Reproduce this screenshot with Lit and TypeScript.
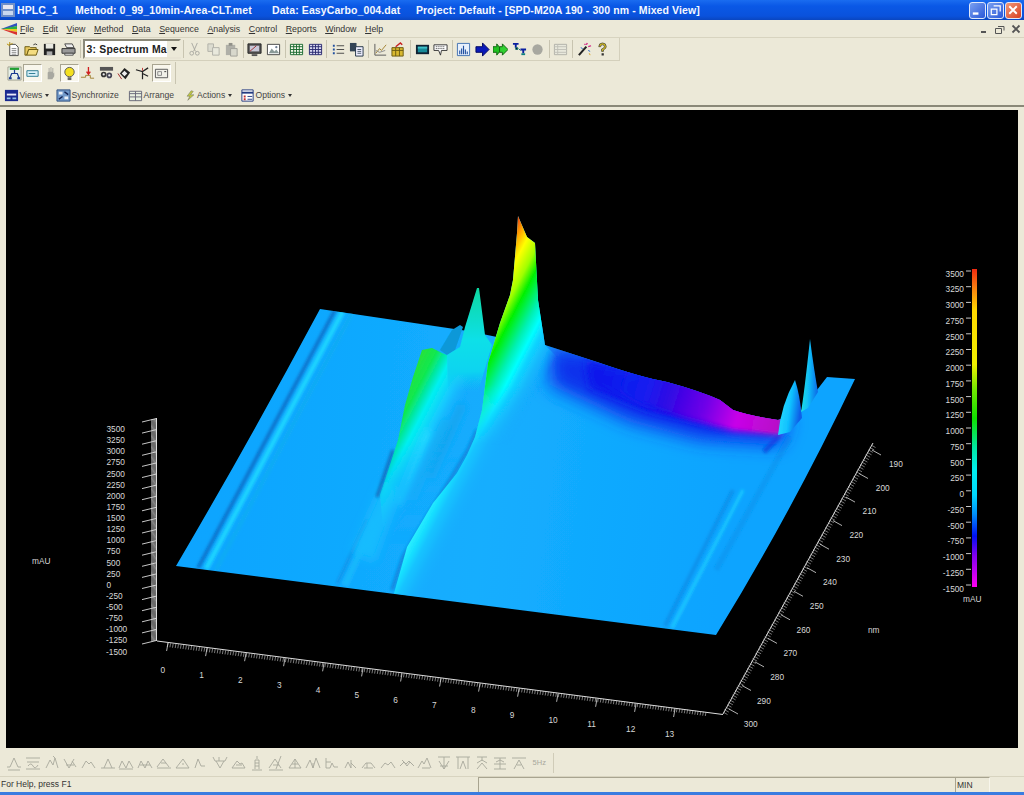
import { LitElement, html, css, svg } from 'lit';
import { customElement } from 'lit/decorators.js';

// 16x16 toolbar glyphs
const ICONS: Record<string, unknown> = {
  neu: svg`<path d="M4 2.5h6l3 3v9H4z" fill="#fff" stroke="#444"/><path d="M6 7h5M6 9h5M6 11h5M6 13h5" stroke="#888"/><path d="M1 2l3 2M4 0v3M7 1L5 3" stroke="#b89000"/>`,
  open: svg`<path d="M1 5h5l1 1h6v2H5l-2 6H1z" fill="#e8c860" stroke="#6a5a10"/><path d="M3 14l2-6h10l-2 6z" fill="#f4dc80" stroke="#6a5a10"/><path d="M10 3q2-2 4 0" stroke="#333" fill="none"/>`,
  save: svg`<path d="M2 2h12v12H2z" fill="#222"/><path d="M4 2h8v5H4z" fill="#e8e8e0"/><path d="M5 10h6v4H5z" fill="#aaa"/>`,
  print: svg`<path d="M4 2h8l2 4H6z" fill="#eee" stroke="#444"/><path d="M1 7h14v5H1z" fill="#999" stroke="#333"/><path d="M4 12h9v2H4z" fill="#fff" stroke="#444"/>`,
  cut: svg`<path d="M5 1l4 9M11 1L7 10" stroke="#a8a8a0" fill="none"/><circle cx="5" cy="12" r="2" stroke="#a8a8a0" fill="none"/><circle cx="11" cy="12" r="2" stroke="#a8a8a0" fill="none"/>`,
  copy: svg`<path d="M2 2h6v8H2z" fill="#dcdcd0" stroke="#b0b0a8"/><path d="M7 6h7v8H7z" fill="#e8e8dc" stroke="#b0b0a8"/>`,
  paste: svg`<path d="M2 3h10v11H2z" fill="#b0b0a8"/><path d="M5 1h4v3H5z" fill="#909088"/><path d="M7 7h7v8H7z" fill="#d8d8cc" stroke="#a0a098"/>`,
  monitor: svg`<path d="M1 2h14v10H1z" fill="#555" stroke="#222"/><path d="M3 4h10v6H3z" fill="#c8c8d8"/><path d="M3 10l7-6" stroke="#a03030"/><path d="M5 13h6v2H5z" fill="#555"/>`,
  picture: svg`<path d="M1.5 2.5h13v11h-13z" fill="#fff" stroke="#444"/><path d="M3 12l3-5 3 3 2-2 3 4z" fill="#8a9a98"/><circle cx="11" cy="5.5" r="1.2" fill="#6a7a90"/>`,
  gridg: svg`<path d="M1.5 2.5h13v11h-13z" fill="#f4f8e8" stroke="#1a6a30"/><path d="M1.5 5h13M1.5 8h13M1.5 11h13M5 2.5v11M8 2.5v11M11 2.5v11" stroke="#1a6a30"/>`,
  gridb: svg`<path d="M1.5 2.5h13v11h-13z" fill="#d8d8f0" stroke="#2a2a70"/><path d="M1.5 5h13M1.5 8h13M1.5 11h13M5 2.5v11M8 2.5v11M11 2.5v11" stroke="#2a2a70"/>`,
  list: svg`<path d="M2 3h2v2H2zM2 7h2v2H2zM2 11h2v2H2z" fill="#2050a0"/><path d="M6 4h8M6 8h8M6 12h8" stroke="#444"/>`,
  docs: svg`<path d="M1 1h7v9H1z" fill="#345" /><path d="M7 5h8v10H7z" fill="#eef" stroke="#234"/><path d="M9 8h4M9 10h4M9 12h4" stroke="#456"/>`,
  chart: svg`<path d="M2 2v12h12" stroke="#555" fill="none"/><path d="M3 12l4-5 2 2 5-6" stroke="#a08030" fill="none"/><path d="M3 9l4 2 6-2" stroke="#888" fill="none"/>`,
  brief: svg`<path d="M1 6h12v9H1z" fill="#d8b830" stroke="#6a5a10"/><path d="M1 9h12M5 6v9M9 6v9" stroke="#6a5a10"/><path d="M5 5l5-4 2 2" stroke="#c82020" fill="none" stroke-width="1.5"/>`,
  teal: svg`<path d="M1 3h14v10H1z" fill="#123"/><path d="M3 5h10v6H3z" fill="#188a98"/><path d="M3 5h10v2H3z" fill="#40c0c8"/>`,
  speech: svg`<path d="M1 3h14v6H9l-1 5-2-5H1z" fill="#fff" stroke="#333"/><path d="M3 5h10M3 7h10" stroke="#333" stroke-dasharray="1 1"/>`,
  bars: svg`<path d="M1.5 1.5h13v13h-13z" fill="#e8f0fc" stroke="#4070b0"/><path d="M4 13V9M6 13V7M8 13V4M10 13V8M12 13V10" stroke="#2050a0" stroke-width="1.2"/>`,
  arrow: svg`<path d="M1 5h7V1l7 7-7 7v-4H1z" fill="#0a1ab8" stroke="#000860"/>`,
  arrow2: svg`<path d="M0 5h4V2l5 6-5 6v-3H0z" fill="#20c020" stroke="#106010"/><path d="M7 5h3V2l6 6-6 6v-3H7z" fill="#30d030" stroke="#106010"/>`,
  tree: svg`<path d="M1 2h6M4 2v4M9 8h6M12 8v4" stroke="#0a20a0" stroke-width="2" fill="none"/><path d="M4 6h2v2H4zM7 7l2 2" stroke="#107070"/><path d="M10 13h4" stroke="#108080" stroke-width="2"/>`,
  dot: svg`<circle cx="8" cy="8" r="5.5" fill="#a8a8a0"/>`,
  table: svg`<path d="M1.5 2.5h13v11h-13z" fill="#e8e8dc" stroke="#b0b0a8"/><path d="M1.5 5h13M1.5 8h13M1.5 11h13M5 2.5v11" stroke="#c0c0b8"/>`,
  wand: svg`<path d="M2 14l8-9" stroke="#222" stroke-width="2.2"/><path d="M10 3l1-2M12 5l3-1M8 2l1 1" stroke="#d02080" stroke-width="1.4"/><path d="M12 9l2 1M4 6l2 1" stroke="#2060c0"/><path d="M13 12l1 2" stroke="#d8a020"/>`,
  help: svg`<path d="M4 5q0-4 4-4t4 4q0 2-3 3.5V10H7V7.5q3-1 3-2.5 0-2-2-2T6 5z" fill="#d8c020" stroke="#333" stroke-width=".7"/><path d="M7 12h2.4v2.4H7z" fill="#333"/>`,
  net: svg`<path d="M1 1h14v14H1z" fill="#e8f0e8" stroke="#a0a090"/><path d="M3 3h10" stroke="#20a030" stroke-width="2.4"/><path d="M8 4v4M3 13l2-5h6l2 5" stroke="#1a3a90" stroke-width="1.3" fill="none"/><path d="M2 13h3M11 13h3" stroke="#1a3a90" stroke-width="2"/>`,
  field: svg`<path d="M2 5h12v6H2z" fill="#d8f0f8" stroke="#2a7a90"/><path d="M4 8h7" stroke="#2a7a90"/>`,
  hand: svg`<path d="M5 14V7l1-1v-4h1v4h1V1h1v5h1V2h1v6l1-1v4l-2 3z" fill="#a8a8a0"/>`,
  bulb: svg`<circle cx="8" cy="6.500" r="5" fill="#f4e020" stroke="#555"/><path d="M6 12h4v3H6z" fill="#666"/>`,
  peakr: svg`<path d="M1 12h5v-2h5v3h4" stroke="#a08030" fill="none"/><path d="M9 1v7M7 6l2 3 2-3" stroke="#d02020" fill="none" stroke-width="1.4"/>`,
  mol: svg`<path d="M1 1h14v4H1z" fill="#555"/><circle cx="5" cy="9" r="3" fill="#333"/><circle cx="11" cy="10" r="3" fill="#445"/><circle cx="5" cy="9" r="1.200" fill="#eee"/><circle cx="11" cy="10" r="1.200" fill="#eee"/>`,
  tag: svg`<path d="M3 8l5-6 6 5-5 7z" fill="#222"/><path d="M5 8l3-3 3 3-3 3z" fill="#eee"/><path d="M1 8l4 6" stroke="#a02020"/>`,
  cross: svg`<path d="M1 4l7 2 6-4M8 6v8M8 8l6 3" stroke="#222" fill="none" stroke-width="1.3"/><path d="M8 2v3" stroke="#c03030"/>`,
  panel: svg`<path d="M1.5 3.5h13v9h-13z" fill="#f0f0e8" stroke="#555"/><path d="M4 6h4v4H4z" fill="none" stroke="#888"/><path d="M11 6h2" stroke="#333"/>`,
  views: svg`<path d="M1 2h14v12H1z" fill="#1a2a90"/><path d="M3 6h10v2H3z" fill="#e8e8f8"/><path d="M3 10h4v2H3zM9 10h4v2H9z" fill="#90c0e8"/>`,
  sync: svg`<path d="M1 2h14v12H1z" fill="#7098c8" stroke="#305080"/><path d="M3 4h4v3H3zM9 9h4v3H9z" fill="#e8f0f8"/><path d="M9 4l4 3M3 12l4-3" stroke="#102050" stroke-width="1.5"/>`,
  arrange: svg`<path d="M1.5 3.5h13v10h-13z" fill="#e8f0e0" stroke="#667"/><path d="M1.5 6h13M8 3.5v10M1.5 9.5h13" stroke="#667"/>`,
  actions: svg`<path d="M9 1L3 9h4l-3 6 9-8H8l4-5z" fill="#c0c840" stroke="#555" stroke-width=".6"/>`,
  options: svg`<path d="M2 2h12v12H2z" fill="#fff" stroke="#223a80"/><path d="M2 5h12" stroke="#223a80" stroke-width="2"/><path d="M4 8h2v2H4zM4 11h2v2H4z" fill="#c03030"/><path d="M8 9h5M8 12h5" stroke="#223a80"/>`,
};

const TOOLBAR_1 = [
  'neu', 'open', 'save', 'print', '|', 'combo', '|', 'cut', 'copy', 'paste', '|', 'monitor', 'picture', '|',
  'gridg', 'gridb', '|', 'list', 'docs', '|', 'chart', 'brief', '|', 'teal', 'speech', '|',
  'bars', 'arrow', 'arrow2', 'tree', 'dot', '|', 'table', '|', 'wand', 'help',
];

const TOOLBAR_2 = [
  { i: 'net', on: false }, { i: 'field', on: true }, { i: 'hand', on: false }, { i: 'bulb', on: true },
  { i: 'peakr', on: false }, { i: 'mol', on: false }, { i: 'tag', on: false }, { i: 'cross', on: false }, { i: 'panel', on: true },
];

const MENU = [
  ['F', 'ile'], ['E', 'dit'], ['V', 'iew'], ['M', 'ethod'], ['D', 'ata'], ['S', 'equence'],
  ['A', 'nalysis'], ['C', 'ontrol'], ['R', 'eports'], ['W', 'indow'], ['H', 'elp'],
];

// grey peak glyphs of the integration bar
const PEAKS = [
  'M1 12h3l4-9 4 9h3M2 15h12', 'M1 3h14M2 7h12M3 11q3-4 5 0t5-1M1 14h14', 'M2 13l4-8 3 5 2-7 3 10M9 1l2 2', 'M2 4l5 9M7 13l5-9M4 10h8M10 6l4 6',
  'M1 13l4-7 3 3 2-2 4 6', 'M1 13h3l4-9 4 9h3M4 13h8', 'M1 13l3-7 4 7 3-7 4 7M1 14h14', 'M1 13l3-7 4 7 3-7 4 7M3 10h10',
  'M1 12l6-8 6 8M1 13h14M5 8h5', 'M1 13l7-9 6 9zM7 9h2', 'M2 13l3-9 3 7h4', 'M1 2l2 4h10l2-4M4 6l4 7 4-7M7 2v4',
  'M1 13l5-7 3 3 2-1 3 5zM5 10h6', 'M8 1v3M6 14V5h4v9M3 15h10M6 8h4M6 11h4', 'M1 13l6-9 6 9M13 1L8 14M1 15h14M5 10h6', 'M2 13l6-9 6 9zM5 9h6M8 4v9',
  'M1 13l4-8 3 8 3-10 4 10M8 8v5', 'M2 3v10h4l2-5 2 4h4M2 7h5', 'M2 13l3-6 3 6M8 13V5M8 8l5 5', 'M1 13l4-5h5l4 5M3 13h9M6 8v5',
  'M1 13l4-5 3 2 3-3 4 6', 'M1 11l4-4 3 4 3-4 4 4M3 5l4 4 3-3 4 4', 'M1 13l4-7 2 3 3-6 4 10M5 13h8', 'M2 2h12M8 2v12M3 6l5 8 5-8M4 11h8',
  'M1 2h14M3 2v12M13 2v12M5 14l3-8 3 8', 'M3 2h10M8 2v4M3 8l5-3 5 3M3 14l5-6 5 6', 'M2 3h12M2 9h12M2 14h12M8 3v11M4 7l4-2 4 2', 'M1 3h14M3 14l5-9 5 9M6 10h4',
];

// mAU values shared by the left axis and the colour bar, top to bottom
const MAU = Array.from({ length: 21 }, (_, i) => 3500 - i * 250);
const NM = Array.from({ length: 12 }, (_, i) => 190 + i * 10);

function hatch(x0: number, y0: number, x1: number, y1: number, n: number, dx: number, dy: number) {
  let d = '';
  for (let i = 0; i <= n; i++) {
    const x = x0 + ((x1 - x0) * i) / n;
    const y = y0 + ((y1 - y0) * i) / n;
    d += `M${x.toFixed(1)} ${y.toFixed(1)}l${dx} ${dy}`;
  }
  return d;
}

const SURFACE =
  'M176 566Q250 440 320 309L468 331L497 337L545 345L600 363Q640 377 667 382Q700 391 720 400L733 410Q750 416 778 420L800 412L827 377L855 379Q790 515 716 635Z';

const BIG_PEAK =
  'M394 593.500L400 572L407 547L420 525L433 503L445 488L457 473L467 455L475 437L482 410L488 363L500 323L510 295L513 280L517 233L518 216L527 237L535 243L538 300L545 345L600 400L620 500L540 612.500Z';

const RIDGES = [
  { d: 'M198 568L335 310', c: '#0a70c8', w: 3.5 },
  { d: 'M206 569L343 311', c: '#1cd4ff', w: 5 },
  { d: 'M216 570L352 313', c: '#10acf4', w: 4 },
  { d: 'M337 584L367 520', c: '#0c94ea', w: 3 },
  { d: 'M345 585L375 520', c: '#16b8fc', w: 6 },
  { d: 'M733 490L665 626', c: '#0a92ec', w: 4 },
  { d: 'M743 490L672 628', c: '#1ccaff', w: 3 },
  { d: 'M790 437L716 570', c: '#0c9af4', w: 6 },
  { d: 'M779 436L764 452', c: '#0a60e0', w: 5 },
];

// soft folds that run over the double peak
const FOLDS = [
  { d: 'M428 430L398 505', c: '#20dcff', w: 6 },
  { d: 'M446 420L412 500', c: '#14aef0', w: 5 },
  { d: 'M462 405L430 478', c: '#14a4ec', w: 6 },
];

@customElement('app-root')
export class AppRoot extends LitElement {
  static styles = css`
    :host {
      display: flex;
      flex-direction: column;
      width: 1024px;
      height: 795px;
      overflow: hidden;
      background: #ece9d8;
      font-family: 'Liberation Sans', Arial, sans-serif;
      font-size: 8.7px;
      color: #333;
    }
    .title {
      flex: none;
      height: 20px;
      display: flex;
      align-items: center;
      background: linear-gradient(#1a6cf0, #0a58e6 30%, #0a52dc 80%, #0a46c0);
      color: #f4f8ff;
      font-weight: bold;
      font-size: 10.5px;
      letter-spacing: 0.1px;
      white-space: pre;
    }
    .logo {
      width: 14px;
      height: 14px;
      margin: 0 2px 0 1px;
    }
    .title span:nth-of-type(1) { width: 58px; }
    .title span:nth-of-type(2) { width: 197px; }
    .title span:nth-of-type(3) { width: 144px; }
    .title span:nth-of-type(4) { flex: 1; }
    .winbtns { display: flex; gap: 1px; margin-right: 2px; }
    .winbtn {
      width: 17px;
      height: 17px;
      box-sizing: border-box;
      border-radius: 3px;
      border: 1px solid #dfe8fb;
      background: linear-gradient(135deg, #7aa0f0, #2a58d8);
    }
    .winbtn.close { background: linear-gradient(135deg, #f09878, #d84020); }
    .winbtn svg { display: block; width: 15px; height: 15px; }
    .menu {
      flex: none;
      height: 18px;
      box-sizing: border-box;
      display: flex;
      align-items: center;
      border-bottom: 1px solid #d8d4c0;
      font-size: 8.8px;
    }
    .menu-logo { width: 16px; height: 14px; margin: 0 3px 0 1px; }
    .menu-item { margin-right: 8.6px; }
    .menu-item u { text-decoration: underline; text-underline-offset: 1px; }
    .mdi { margin-left: auto; display: flex; gap: 6px; margin-right: 3px; color: #555; }
    .mdi svg { display: block; width: 10px; height: 10px; }
    .rows { flex: none; height: 47px; }
    .bar {
      display: flex;
      align-items: center;
      height: 23px;
      box-sizing: border-box;
      width: max-content;
      padding: 0 7px 0 4px;
      border-right: 1px solid #d4d0bc;
      border-bottom: 1px solid #d4d0bc;
    }
    .bar.second { height: 24px; padding: 0 0 0 5px; border: none; }
    .bar.second .sep { margin-left: 2px; height: 22px; }
    .btn {
      width: 18.4px;
      height: 18px;
      display: flex;
      align-items: center;
      justify-content: center;
      box-sizing: border-box;
    }
    .btn.on {
      background: #f8f6ec;
      border: 1px solid;
      border-color: #a8a490 #fff #fff #a8a490;
    }
    .btn svg, .tool svg { width: 15px; height: 15px; display: block; flex: none; }
    .sep { width: 5px; height: 18px; display: flex; justify-content: center; flex: none; }
    .sep::before { content: ''; width: 1px; background: #c8c4b0; }
    .combo {
      width: 98px;
      height: 20px;
      box-sizing: border-box;
      display: flex;
      align-items: center;
      background: #fff;
      border: 2px solid;
      border-color: #8a8878 #e8e4d4 #e8e4d4 #8a8878;
      font: bold 10.4px 'Liberation Sans', Arial, sans-serif;
      letter-spacing: 0.2px;
      color: #222;
      padding-left: 2px;
      white-space: nowrap;
    }
    .combo b { flex: 1; font-weight: bold; }
    .combo i {
      width: 14px;
      height: 16px;
      flex: none;
      background: #ece9d8;
      display: flex;
      align-items: center;
      justify-content: center;
    }
    .combo i::before {
      content: '';
      border: 3px solid transparent;
      border-top: 4px solid #111;
      border-bottom: none;
    }
    .tools {
      flex: none;
      height: 20px;
      display: flex;
      align-items: center;
      font-size: 8.6px;
      color: #444;
    }
    .tool { display: flex; align-items: center; gap: 0.5px; }
    .tool.views { margin-left: 4px; width: 52px; }
    .tool.sync { width: 72px; }
    .tool.arrange { width: 57px; }
    .tool.actions { width: 55px; gap: 1px; }
    .tool.actions svg { width: 11px; }
    .caret {
      border: 2px solid transparent;
      border-top: 3px solid #333;
      border-bottom: none;
      margin-left: 2px;
    }
    .well {
      flex: none;
      height: 644px;
      box-sizing: border-box;
      padding: 3px 6px 1px 6px;
      border-top: 2px solid #8a8878;
    }
    .plot { display: block; width: 1012px; height: 638px; background: #000; }
    .plot text { font: 8.3px 'Liberation Sans', Arial, sans-serif; fill: #d8d8d8; }
    .peaks {
      flex: none;
      height: 28px;
      box-sizing: border-box;
      display: flex;
      align-items: center;
      padding-left: 5px;
      border-bottom: 1px solid #d8d4c0;
    }
    .peak { width: 18.7px; height: 18px; display: flex; justify-content: center; align-items: center; }
    .peak svg { width: 16px; height: 16px; fill: none; stroke: #a8a89c; stroke-width: 0.9; }
    .hz { font-size: 7.5px; color: #a8a89c; width: 22px; text-align: center; }
    .peak-sep { width: 1px; height: 20px; background: #d0ccb8; margin-left: 3px; }
    .status {
      flex: 1;
      display: flex;
      align-items: stretch;
      font-size: 8.5px;
      line-height: 14px;
    }
    .status .help { width: 478px; padding-left: 1px; box-sizing: border-box; }
    .status .pane { border-top: 1px solid #a8a490; border-left: 1px solid #a8a490; box-sizing: border-box; }
    .pane.wide { width: 477px; }
    .pane.min { width: 35px; padding-left: 1px; border-right: 1px solid #f8f6ec; }
    .edge { flex: none; height: 4px; background: #3a7ce0; }
  `;

  private ico(name: string) {
    return html`<svg viewBox="0 0 16 16">${ICONS[name]}</svg>`;
  }

  private renderPlot() {
    const barStops = [
      [0, '#f02a10'], [0.06, '#f88010'], [0.13, '#ffd800'], [0.3, '#f0f000'], [0.38, '#70e800'], [0.47, '#10e000'],
      [0.56, '#00e8a0'], [0.63, '#00f0f0'], [0.71, '#00d8ff'], [0.77, '#0090f8'], [0.84, '#0010f0'], [0.9, '#8000f0'], [1, '#ff00f0'],
    ];
    return html`<svg class="plot" viewBox="6 110 1012 638">
      <defs>
        <linearGradient id="bar" x1="0" y1="0" x2="0" y2="1">
          ${barStops.map(([o, c]) => svg`<stop offset=${o} stop-color=${c} />`)}
        </linearGradient>
        <linearGradient id="base" gradientUnits="userSpaceOnUse" x1="176" y1="566" x2="716" y2="635">
          <stop offset="0" stop-color="#0ca4ff" />
          <stop offset="0.55" stop-color="#14aefe" />
          <stop offset="1" stop-color="#0ca4ff" />
        </linearGradient>
        <linearGradient id="big" gradientUnits="userSpaceOnUse" x1="518" y1="216" x2="628" y2="273">
          <stop offset="0" stop-color="#f04010" />
          <stop offset="0.07" stop-color="#ffa000" />
          <stop offset="0.15" stop-color="#ffff00" />
          <stop offset="0.25" stop-color="#a0ff00" />
          <stop offset="0.33" stop-color="#00f000" />
          <stop offset="0.46" stop-color="#00f0b0" />
          <stop offset="0.54" stop-color="#00ffff" />
          <stop offset="0.6" stop-color="#10d4ff" />
          <stop offset="0.68" stop-color="#14b8fc" />
          <stop offset="0.8" stop-color="#10a8fa" stop-opacity="0" />
        </linearGradient>
        <linearGradient id="bigLow" gradientUnits="userSpaceOnUse" x1="518" y1="216" x2="628" y2="273">
          <stop offset="0.42" stop-color="#30f4ff" />
          <stop offset="0.49" stop-color="#18e0ff" />
          <stop offset="0.55" stop-color="#14c4ff" />
          <stop offset="0.63" stop-color="#14b4fe" />
          <stop offset="0.74" stop-color="#14aefe" stop-opacity="0" />
        </linearGradient>
        <linearGradient id="bigFade" gradientUnits="userSpaceOnUse" x1="0" y1="385" x2="0" y2="445">
          <stop offset="0" stop-color="#fff" />
          <stop offset="1" stop-color="#000" />
        </linearGradient>
        <mask id="bigMask" maskUnits="userSpaceOnUse" x="380" y="200" width="260" height="420">
          <rect x="380" y="200" width="260" height="420" fill="url(#bigFade)" />
        </mask>
        <linearGradient id="small" gradientUnits="userSpaceOnUse" x1="422" y1="340" x2="480" y2="370">
          <stop offset="0" stop-color="#30e030" />
          <stop offset="0.28" stop-color="#10e850" />
          <stop offset="0.42" stop-color="#00e8b0" />
          <stop offset="0.52" stop-color="#00f0f0" />
          <stop offset="0.75" stop-color="#18c8ff" />
          <stop offset="1" stop-color="#10a8fa" stop-opacity="0.2" />
        </linearGradient>
        <linearGradient id="spike" x1="0" y1="0" x2="0" y2="1">
          <stop offset="0" stop-color="#10d8a0" />
          <stop offset="0.5" stop-color="#10e0e8" />
          <stop offset="0.8" stop-color="#10d4f0" />
          <stop offset="1" stop-color="#10c0f8" stop-opacity="0" />
        </linearGradient>
        <linearGradient id="wallFade" gradientUnits="userSpaceOnUse" x1="0" y1="440" x2="0" y2="545">
          <stop offset="0" stop-color="#fff" />
          <stop offset="1" stop-color="#000" />
        </linearGradient>
        <mask id="wallMask" maskUnits="userSpaceOnUse" x="340" y="280" width="180" height="320">
          <rect x="340" y="280" width="180" height="320" fill="url(#wallFade)" />
        </mask>
        <linearGradient id="purple" gradientUnits="userSpaceOnUse" x1="600" y1="370" x2="778" y2="425">
          <stop offset="0" stop-color="#0028f0" stop-opacity="0" />
          <stop offset="0.26" stop-color="#1820f0" />
          <stop offset="0.4" stop-color="#3008e4" />
          <stop offset="0.6" stop-color="#7000e8" />
          <stop offset="0.78" stop-color="#c800e8" />
          <stop offset="1" stop-color="#b810c8" />
        </linearGradient>
        <linearGradient id="peakA" x1="0" y1="0" x2="1" y2="0.3">
          <stop offset="0" stop-color="#30e8ff" />
          <stop offset="0.6" stop-color="#10c0ff" />
          <stop offset="1" stop-color="#0a60e8" />
        </linearGradient>
        <linearGradient id="peakB" x1="0" y1="0" x2="1" y2="0.1">
          <stop offset="0" stop-color="#20e8e0" />
          <stop offset="0.55" stop-color="#10b8f8" />
          <stop offset="1" stop-color="#0a70e8" />
        </linearGradient>
        <clipPath id="surf"><path d=${SURFACE} /></clipPath>
        <filter id="b0" x="-5%" y="-5%" width="110%" height="110%"><feGaussianBlur stdDeviation="0.5" /></filter>
        <filter id="b2" x="-30%" y="-30%" width="160%" height="160%"><feGaussianBlur stdDeviation="1.8" /></filter>
        <filter id="b3" x="-40%" y="-40%" width="180%" height="180%"><feGaussianBlur stdDeviation="3" /></filter>
        <filter id="b5" x="-60%" y="-60%" width="220%" height="220%"><feGaussianBlur stdDeviation="5" /></filter>
        <filter id="b6" x="-20%" y="-40%" width="140%" height="180%"><feGaussianBlur stdDeviation="9" /></filter>
      </defs>

      <!-- value axis -->
      <path d="M156.5 418V641" stroke="#ddd" />
      <path d=${hatch(151, 420, 151, 641, 200, 5.5, -0.8)} stroke="#e4e4e4" stroke-width="0.6" />
      <path d=${hatch(142, 422, 142, 644, 20, 14, -3.4)} stroke="#ddd" stroke-width="0.9" />
      ${MAU.map((v, i) => svg`<text x=${v < 0 ? 106 : 106.5} y=${432 + i * 11.13}>${v}</text>`)}
      <text x="32" y="564">mAU</text>

      <!-- time axis -->
      <path d="M157 641L723 714.5" stroke="#ddd" />
      <path d=${hatch(168, 643, 706, 712, 205, -0.7, 4)} stroke="#ccc" stroke-width="0.6" />
      <path d=${hatch(168, 643, 675, 709, 13, -1.4, 8)} stroke="#ddd" stroke-width="0.8" />
      ${Array.from({ length: 14 }, (_, i) => svg`<text x=${160.5 + i * 38.8} y=${673 + i * 4.95}>${i}</text>`)}

      <!-- wavelength axis -->
      <path d="M873 443L723 714" stroke="#ddd" />
      <path d=${hatch(723, 712, 871, 445, 110, 4.5, 2.5)} stroke="#c4c4c4" stroke-width="0.6" />
      <path d=${hatch(872, 450, 729, 709, 11, 9, 5)} stroke="#ddd" stroke-width="0.8" />
      ${NM.map((v, i) => svg`<text x=${889 - i * 13.2} y=${467 + i * 23.65}>${v}</text>`)}
      <text x="868" y="633">nm</text>

      <g filter="url(#b0)">
        <!-- surface -->
        <path d=${SURFACE} fill="url(#base)" />
        <g clip-path="url(#surf)">
          <g filter="url(#b2)">
            ${RIDGES.map((r) => svg`<path d=${r.d} stroke=${r.c} stroke-width=${r.w} fill="none" />`)}
          </g>
          <path d="M383 483L400 490L374 562L352 552Z" fill="#18bcfe" filter="url(#b5)" />
          <path d="M550 345L640 360L720 395L790 420L780 445L700 440L630 422L550 385Z" fill="#0a30ec" filter="url(#b6)" />
          <path d="M585 360L650 378L720 410L770 425L720 428L650 412L590 388Z" fill="#0a18ec" filter="url(#b5)" />
          <path d="M600 355L667 375L720 392L733 402L780 414L780 435L733 431L683 418L633 400L590 378Z" fill="url(#purple)" filter="url(#b3)" />
          <path d="M700 392L733 404L780 414L780 433L733 427L700 412Z" fill="url(#purple)" filter="url(#b2)" />
        </g>

        <!-- peak walls -->
        <path d="M377 497L393 450" stroke="#0a68b8" stroke-width="3" fill="none" filter="url(#b2)" />
        <g mask="url(#wallMask)">
          <path d="M380 495L385 480L398 440L405 405L413 377L422 350L432 348L442 353L447 355L470 370L490 400L475 450L445 510L420 560L385 550Z" fill="url(#small)" />
          <g filter="url(#b3)">
            ${FOLDS.map((r) => svg`<path d=${r.d} stroke=${r.c} stroke-width=${r.w} fill="none" />`)}
          </g>
        </g>
        <path d="M440 350L452 330L460 325L463 327L455 350L447 355Z" fill="#0c98d8" />
        <path d="M447 355L460 347L465 327L477 288L479 288L485 335L492 345L478 392L448 392Z" fill="url(#spike)" />
        <path d="M392 590L403 557L425 520L450 480L468 450L477 430" stroke="#0a80d8" stroke-width="3" fill="none" filter="url(#b2)" />
        <path d=${BIG_PEAK} fill="url(#bigLow)" />
        <path d=${BIG_PEAK} fill="url(#big)" mask="url(#bigMask)" />

        <!-- late peaks at the far edge -->
        <path d="M778 435Q781 405 795 380Q800 395 802 418L790 432Z" fill="url(#peakA)" />
        <path d="M801 412Q804 395 810 339Q814 370 818 392L808 408Z" fill="url(#peakB)" />
      </g>

      <!-- colour bar -->
      <rect x="972" y="269" width="5" height="318" fill="url(#bar)" />
      <path d=${hatch(966, 271, 966, 585, 20, 5, 0)} stroke="#ddd" stroke-width="0.9" />
      ${MAU.map((v, i) => svg`<text x="964" y=${276.5 + i * 15.75} text-anchor="end">${v}</text>`)}
      <text x="963" y="602">mAU</text>
    </svg>`;
  }

  render() {
    return html`
      <div class="title">
        <svg class="logo" viewBox="0 0 14 14">
          <path d="M0 0h14v14H0z" fill="#7090c8" /><path d="M2 2h10v4H2z" fill="#e8e8f0" /><path d="M2 8h10v4H2z" fill="#c8d8f0" />
        </svg>
        <span>HPLC_1</span><span>Method: 0_99_10min-Area-CLT.met</span><span>Data: EasyCarbo_004.dat</span><span>Project: Default - [SPD-M20A 190 - 300 nm - Mixed View]</span>
        <div class="winbtns">
          <div class="winbtn"><svg viewBox="0 0 16 16"><path d="M3 10h6v2.500H3z" fill="#fff" /></svg></div>
          <div class="winbtn"><svg viewBox="0 0 16 16"><path d="M6 3h7v6M3.500 6.500h6v6h-6z" fill="none" stroke="#fff" stroke-width="1.300" /></svg></div>
          <div class="winbtn close"><svg viewBox="0 0 16 16"><path d="M3.500 3.500l8 8M11.500 3.500l-8 8" stroke="#fff" stroke-width="2" /></svg></div>
        </div>
      </div>

      <div class="menu">
        <svg class="menu-logo" viewBox="0 0 16 14">
          <path d="M0 7L16 1v3L5 7z" fill="#3050c0" /><path d="M0 7l16-3v3z" fill="#30b040" /><path d="M0 7h16v3z" fill="#e8c820" /><path d="M0 7l16 3v3z" fill="#d83030" />
        </svg>
        ${MENU.map(([k, rest]) => html`<span class="menu-item"><u>${k}</u>${rest}</span>`)}
        <div class="mdi">
          <svg viewBox="0 0 10 10"><path d="M2 8h5" stroke="#555" stroke-width="2" /></svg>
          <svg viewBox="0 0 10 10"><path d="M3 2.500h6v4M.5 4.500h6v5h-6z" fill="none" stroke="#555" /></svg>
          <svg viewBox="0 0 10 10"><path d="M1.500 1.500l7 7M8.500 1.500l-7 7" stroke="#555" stroke-width="1.800" /></svg>
        </div>
      </div>

      <div class="rows">
        <div class="bar">
          ${TOOLBAR_1.map((t) =>
            t === '|'
              ? html`<div class="sep"></div>`
              : t === 'combo'
                ? html`<div class="combo"><b>3: Spectrum Ma</b><i></i></div>`
                : html`<div class="btn">${this.ico(t)}</div>`,
          )}
        </div>
        <div class="bar second">
          ${TOOLBAR_2.map((t) => html`<div class="btn ${t.on ? 'on' : ''}">${this.ico(t.i)}</div>`)}
          <div class="sep"></div>
        </div>
      </div>

      <div class="tools">
        <div class="tool views">${this.ico('views')}Views<span class="caret"></span></div>
        <div class="tool sync">${this.ico('sync')}Synchronize</div>
        <div class="tool arrange">${this.ico('arrange')}Arrange</div>
        <div class="tool actions">${this.ico('actions')}Actions<span class="caret"></span></div>
        <div class="tool">${this.ico('options')}Options<span class="caret"></span></div>
      </div>

      <div class="well">${this.renderPlot()}</div>

      <div class="peaks">
        ${PEAKS.map((d) => html`<div class="peak"><svg viewBox="0 0 16 16"><path d=${d} /></svg></div>`)}
        <div class="hz">5Hz</div>
        <div class="peak-sep"></div>
      </div>

      <div class="status">
        <div class="help">For Help, press F1</div>
        <div class="pane wide"></div>
        <div class="pane min">MIN</div>
      </div>
      <div class="edge"></div>
    `;
  }
}

declare global {
  interface HTMLElementTagNameMap {
    'app-root': AppRoot;
  }
}
